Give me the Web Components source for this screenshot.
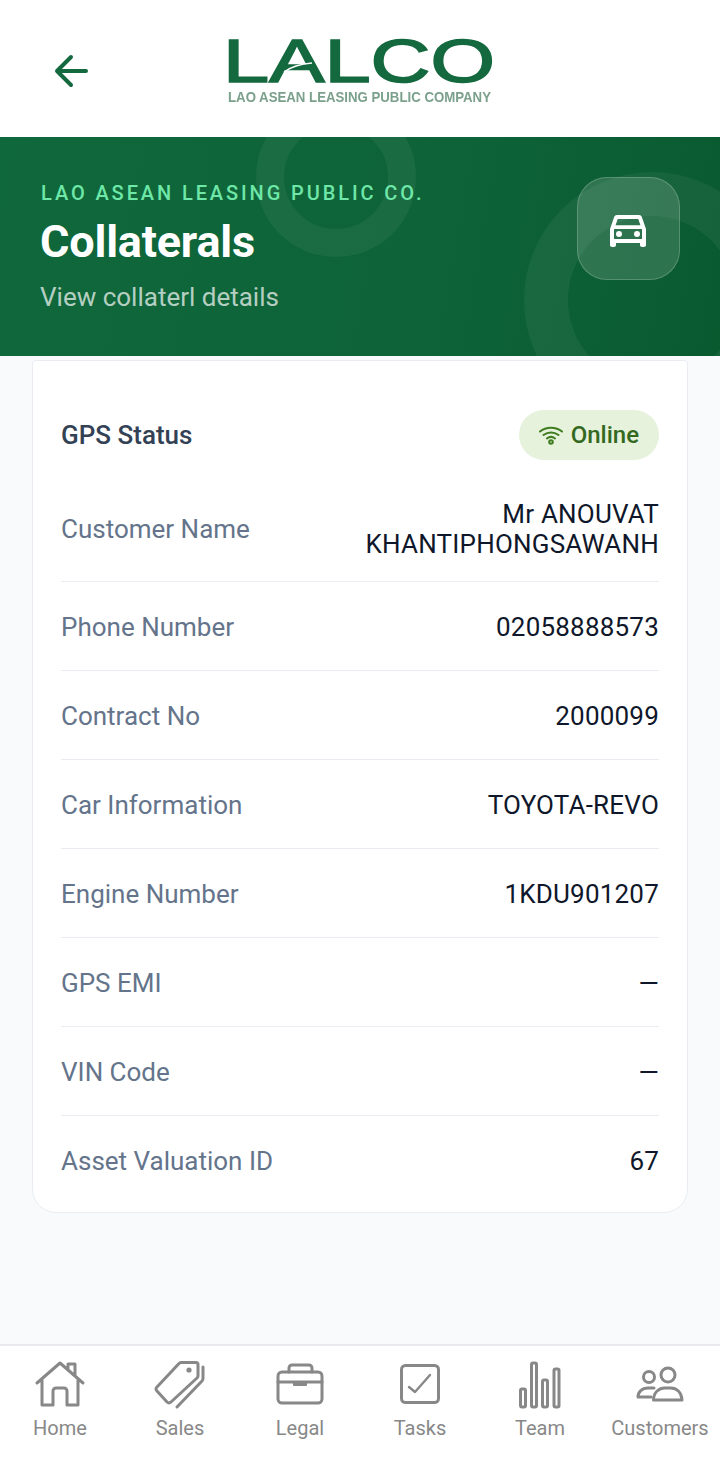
<!DOCTYPE html>
<html lang="en"><head><meta charset="utf-8"><title>Collaterals</title>
<style>
html,body{margin:0;padding:0;background:#f8fafc}
body{font-family:Roboto,"Liberation Sans",sans-serif;width:720px;height:1460px;overflow:hidden}
collateral-screen{height:1460px}
</style></head><body>
<collateral-screen>
  <app-header slot="header"></app-header>
  <page-hero slot="hero" eyebrow="LAO ASEAN LEASING PUBLIC CO." title="Collaterals" subtitle="View collaterl details"></page-hero>
  <info-card>
    <status-row label="GPS Status" value="Online"></status-row>
    <info-row label="Customer Name" tall>Mr ANOUVAT<br>KHANTIPHONGSAWANH</info-row>
    <info-row label="Phone Number">02058888573</info-row>
    <info-row label="Contract No">2000099</info-row>
    <info-row label="Car Information">TOYOTA-REVO</info-row>
    <info-row label="Engine Number">1KDU901207</info-row>
    <info-row label="GPS EMI">—</info-row>
    <info-row label="VIN Code">—</info-row>
    <info-row label="Asset Valuation ID" last>67</info-row>
  </info-card>
  <bottom-nav slot="nav">
    <nav-item label="Home"><svg viewBox="0 0 52 52" width="52" height="52"><path d="M3 23 26 3l23 20M8 20v25h11V31a3 3 0 0 1 3-3h8a3 3 0 0 1 3 3v14h11V20M34 9V4h7v12"/></svg></nav-item>
    <nav-item label="Sales"><svg viewBox="0 0 52 52" width="52" height="52"><path d="M25 3.500a3 3 0 0 1 2-1h15a2 2 0 0 1 2 2V16a3 3 0 0 1-1 2L17 42a3 3 0 0 1-4 0L3 31a2.500 2.500 0 0 1 0-4Z"/><circle cx="35" cy="10" r="2.600" fill="#888" stroke="none"/><path d="M49 7v11a4 4 0 0 1-1 3L23 47"/></svg></nav-item>
    <nav-item label="Legal"><svg viewBox="0 0 52 52" width="52" height="52"><rect x="4" y="12" width="44" height="31" rx="4"/><path d="M15 12V8a3 3 0 0 1 3-3h17a3 3 0 0 1 3 3v4M4 22h44"/><rect x="19" y="22" width="14" height="4" rx="1" fill="#888" stroke="none"/></svg></nav-item>
    <nav-item label="Tasks"><svg viewBox="0 0 52 52" width="52" height="52"><rect x="7.500" y="5.500" width="37" height="37" rx="4"/><path d="m15 27 6 5 15-17" stroke-width="2.400"/></svg></nav-item>
    <nav-item label="Team"><svg viewBox="0 0 52 52" width="52" height="52"><rect x="6.500" y="29" width="5" height="18" rx="1.500"/><rect x="17.500" y="3" width="5" height="44" rx="1.500"/><rect x="28.500" y="20" width="5" height="27" rx="1.500"/><rect x="40" y="9" width="5" height="38" rx="1.500"/></svg></nav-item>
    <nav-item label="Customers"><svg viewBox="0 0 52 52" width="52" height="52"><circle cx="15" cy="17" r="5.500"/><circle cx="34" cy="15" r="7"/><path d="M20 28h-6C8 28 4 32 4 37h13"/><path d="M19.500 40c0-8 6-12 11-12h6c6 0 11 4 11.500 12Z"/></svg></nav-item>
  </bottom-nav>
</collateral-screen>
<script>
function def(name, css, html){
  customElements.define(name, class extends HTMLElement{
    connectedCallback(){
      if(this.shadowRoot) return;
      const r=this.attachShadow({mode:'open'});
      const a=k=>this.getAttribute(k)||'';
      r.innerHTML='<style>'+css+'</style>'+(typeof html==='function'?html(a):html);
    }
  });
}
def('collateral-screen',
 ':host{display:flex;flex-direction:column;width:720px;background:#f8fafc}main{flex:1;min-height:0;padding:4px 32px 0}',
 '<slot name="header"></slot><slot name="hero"></slot><main><slot></slot></main><slot name="nav"></slot>');
def('app-header',
 ':host{display:grid;grid-template-columns:1fr auto 1fr;align-items:center;height:137px;background:#fff}'+
 '.back{display:block;margin-left:52px;margin-top:5px}.logo{display:block;margin-left:-1px;margin-top:1px;overflow:visible}',
 `<svg class="back" width="40" height="40" viewBox="0 0 40 40" fill="none" stroke="#14693f" stroke-width="4" stroke-linecap="round" stroke-linejoin="round"><path d="M34 20H5M19 6 5 20l14 14"/></svg>
 <svg class="logo" width="264" height="80" viewBox="0 0 264 80"><g style="filter:blur(.55px)">
 <text x="-5" y="53" font-family="Liberation Sans" font-size="62" stroke="#14693f" stroke-width="1.600" fill="#14693f" textLength="272" lengthAdjust="spacingAndGlyphs">LALCO</text>
 <path d="M56 43C64 37 72 35 84 34" fill="none" stroke="#fff" stroke-width="1.400"/>
 <text x="0" y="73" font-family="Liberation Sans" font-size="15" font-weight="700" fill="#7ba08c" textLength="263" lengthAdjust="spacingAndGlyphs">LAO ASEAN LEASING PUBLIC COMPANY</text></g></svg><span></span>`);
def('page-hero',
 ':host{display:block;position:relative;overflow:hidden;height:219px;box-sizing:border-box;padding:42px 40px 0;background:linear-gradient(100deg,#0f683b 0%,#0e6338 60%,#0a5a30 100%);color:#fff}'+
 '.ring{position:absolute;border-radius:50%;box-sizing:border-box;border-style:solid;border-color:rgba(255,255,255,.05)}'+
 '.r1{left:256px;top:-40px;width:160px;height:160px;border-width:28px}.r2{left:524px;top:35px;width:256px;height:256px;border-width:44px}'+
 '.eyebrow{position:relative;margin-left:1px;font-size:20px;line-height:28px;font-weight:500;letter-spacing:2.900px;color:#6ee7a8}'+
 'h1{position:relative;margin:7px 0 0;font-size:45px;line-height:56px;font-weight:700;letter-spacing:-.2px}'+
 '.sub{position:relative;margin-top:10px;font-size:26px;line-height:34px;color:rgba(255,255,255,.7)}'+
 '.tile{position:absolute;left:577px;top:40px;width:103px;height:103px;box-sizing:border-box;border:1.500px solid rgba(255,255,255,.2);border-radius:30px;background:rgba(255,255,255,.14);display:flex;align-items:center;justify-content:center}'+
 '.tile svg{margin-left:-2px}',
 a=>`<div class="ring r1"></div><div class="ring r2"></div>
 <div class="eyebrow">${a('eyebrow')}</div><h1>${a('title')}</h1><div class="sub">${a('subtitle')}</div>
 <div class="tile"><svg width="48" height="48" viewBox="0 0 24 24" fill="#fff"><path d="M18.920 6.010C18.720 5.420 18.160 5 17.500 5h-11c-.66 0-1.210.42-1.420 1.010L3 12v8c0 .55.45 1 1 1h1c.55 0 1-.45 1-1v-1h12v1c0 .55.45 1 1 1h1c.55 0 1-.45 1-1v-8l-2.080-5.990zM6.850 7h10.290l1.080 3.110H5.770L6.850 7zM19 17H5v-5h14v5z"/><circle cx="7.500" cy="14.500" r="1.500"/><circle cx="16.500" cy="14.500" r="1.500"/></svg></div>`);
def('info-card',
 ':host{display:block;background:#fff;border:1px solid #e9edf2;border-radius:4px 4px 24px 24px;padding:0 28px 8px;height:853px;box-sizing:border-box}',
 '<slot></slot>');
def('status-row',
 ':host{display:flex;justify-content:space-between;align-items:center;padding:49px 0 3px}'+
 '.l{font-size:26px;line-height:50px;font-weight:500;color:#334155}'+
 '.pill{display:flex;align-items:center;gap:8px;height:50px;padding:0 20px;box-sizing:border-box;border-radius:25px;background:#e6f2dc;color:#33691e;font-size:24px;font-weight:500}',
 a=>`<span class="l">${a('label')}</span><span class="pill"><svg width="24" height="24" viewBox="0 0 24 24" fill="none" stroke="#3f7d20" stroke-width="2" stroke-linecap="round"><path d="M1 8.500C7 3.500 17 3.500 23 8.500M4.500 12C9 8.500 15 8.500 19.500 12M8 15.500c2.500-2 5.500-2 8 0"/><circle cx="12" cy="19" r="1.800"/></svg>${a('value')}</span>`);
def('info-row',
 ':host{display:flex;justify-content:space-between;align-items:center;box-sizing:border-box;padding:30px 0 28px;border-bottom:1px solid #e9edf2}'+
 ':host([tall]){padding:36px 0 22px}:host([last]){border-bottom:0}'+
 '.l{font-size:26px;line-height:30px;color:#64748b}.v{font-size:26px;line-height:30px;letter-spacing:.2px;color:#0f172a;text-align:right}',
 a=>`<span class="l">${a('label')}</span><span class="v"><slot></slot></span>`);
def('bottom-nav',
 ':host{display:grid;grid-template-columns:repeat(6,120px);height:116px;box-sizing:border-box;padding-top:14px;background:#fff;border-top:2px solid #e8eaee}',
 '<slot></slot>');
def('nav-item',
 ':host{display:flex;flex-direction:column;align-items:center;color:#888;font-size:20px;line-height:26px}'+
 '.i{height:52px;margin-bottom:3px}::slotted(svg){display:block;fill:none;stroke:#888;stroke-width:3;stroke-linecap:round;stroke-linejoin:round}',
 a=>`<span class="i"><slot></slot></span><span>${a('label')}</span>`);
</script>
</body></html>
